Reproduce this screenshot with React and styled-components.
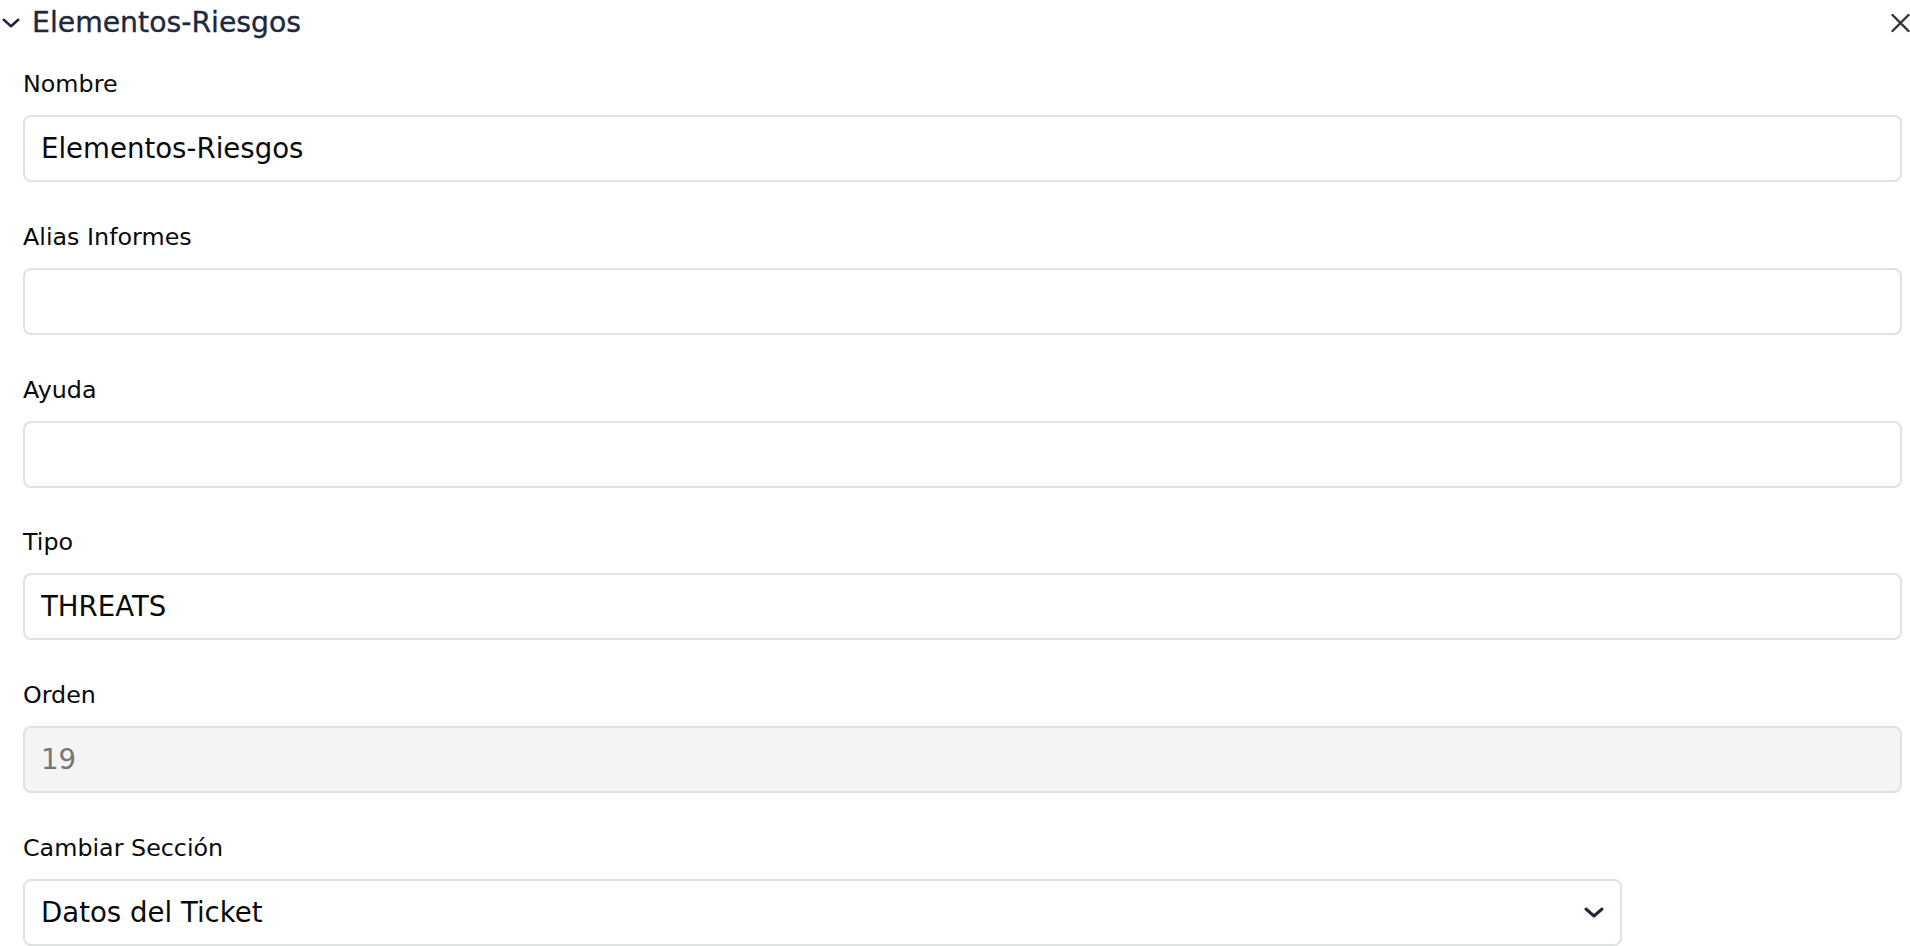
import React from "react";
import styled, { createGlobalStyle } from "styled-components";

const Global = createGlobalStyle`
  * { box-sizing: border-box; }
  html, body { margin: 0; padding: 0; background: #ffffff; }
  body { font-family: "DejaVu Sans", "Liberation Sans", sans-serif; color: #111; }
`;

const Panel = styled.div`
  width: 1910px;
  height: 946px;
  overflow: hidden;
  display: flex;
  flex-direction: column;
`;

const Header = styled.div`
  height: 46px;
  display: flex;
  align-items: center;
  justify-content: space-between;
  padding-left: 2px;
`;

const TitleGroup = styled.div`
  display: flex;
  align-items: center;
`;

const Title = styled.span`
  margin-left: 12px;
  font-size: 28.3px;
  line-height: 46px;
  color: #1e293b;
  -webkit-text-stroke: 0.35px #1e293b;
`;

const IconButton = styled.button`
  border: 0;
  background: none;
  padding: 0;
  margin: 0;
  display: flex;
  align-items: center;
  cursor: pointer;
`;

const Form = styled.form`
  display: flex;
  flex-direction: column;
  gap: 38.8px;
  padding: 22px 8px 0 23px;
`;

const Field = styled.div`
  display: flex;
  flex-direction: column;
  gap: 15px;
`;

const Label = styled.label`
  font-size: 23.8px;
  line-height: 32px;
  height: 32px;
  color: #0a0a0a;
`;

const Input = styled.input`
  width: 100%;
  height: 67px;
  border: 2px solid #dde3e3;
  border-radius: 8px;
  padding: 0 16px;
  font-family: inherit;
  font-size: 27.6px;
  color: ${(p) => (p.disabled ? "#767676" : "#0a0a0a")};
  background: ${(p) => (p.disabled ? "#f4f4f4" : "#fff")};
  outline: none;
`;

const SelectWrap = styled.div`
  width: 1599px;
  height: 67px;
  border: 2px solid #dde3e3;
  border-radius: 8px;
  padding: 0 16px 0 16px;
  display: flex;
  align-items: center;
  justify-content: space-between;
  font-size: 27.6px;
  color: #0a0a0a;
  background: #fff;
`;

const Chevron = ({ w, h, sw, color }) => (
  <svg width={w} height={h} viewBox={`0 0 ${w} ${h}`} fill="none">
    <polyline
      points={`${sw / 2 + 0.5},${sw / 2 + 0.5} ${w / 2},${h - sw / 2 - 0.5} ${w - sw / 2 - 0.5},${sw / 2 + 0.5}`}
      stroke={color}
      strokeWidth={sw}
      strokeLinecap="round"
      strokeLinejoin="round"
    />
  </svg>
);

const CloseIcon = () => (
  <svg width="19" height="20" viewBox="0 0 19 20" fill="none">
    <path d="M1.5 2 L17.5 18 M17.5 2 L1.5 18" stroke="#333" strokeWidth="2.4" strokeLinecap="round" />
  </svg>
);

const fields = [
  { label: "Nombre", value: "Elementos-Riesgos" },
  { label: "Alias Informes", value: "" },
  { label: "Ayuda", value: "" },
  { label: "Tipo", value: "THREATS" },
  { label: "Orden", value: "19", disabled: true },
];

export default function App() {
  return (
    <>
      <Global />
      <Panel>
        <Header>
          <TitleGroup>
            <Chevron w={18} h={10} sw={2.5} color="#1e293b" />
            <Title>Elementos-Riesgos</Title>
          </TitleGroup>
          <IconButton type="button" aria-label="Cerrar">
            <CloseIcon />
          </IconButton>
        </Header>
        <Form onSubmit={(e) => e.preventDefault()}>
          {fields.map((f) => (
            <Field key={f.label}>
              <Label>{f.label}</Label>
              <Input defaultValue={f.value} disabled={f.disabled} readOnly={f.disabled} />
            </Field>
          ))}
          <Field>
            <Label>Cambiar Sección</Label>
            <SelectWrap>
              <span>Datos del Ticket</span>
              <Chevron w={20} h={11} sw={3} color="#1f2937" />
            </SelectWrap>
          </Field>
        </Form>
      </Panel>
    </>
  );
}
